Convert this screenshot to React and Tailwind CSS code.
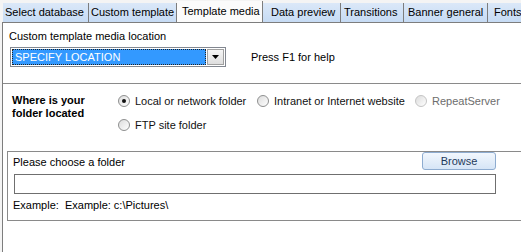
import React from 'react';

const tabs = [
  { label: 'Select database', w: 'w-[86px]', pl: 'pl-[2px]' },
  { label: 'Custom template', w: 'w-[88px]', pl: 'pl-[2px]' },
  { label: 'Template media', w: 'w-[86px]', pl: 'pl-[5px]', active: true },
  { label: 'Data preview', w: 'w-[78px]', pl: 'pl-[8px]' },
  { label: 'Transitions', w: 'w-[63px]', pl: 'pl-[3px]' },
  { label: 'Banner general', w: 'w-[84px]', pl: 'pl-[4px]' },
  { label: 'Fonts', w: 'w-[60px]', pl: 'pl-[6px]' },
];

const Radio = ({ checked, disabled, label, width }) => (
  <div className={`flex items-center h-[16px] ${width}`}>
    <span
      className={`relative w-[12px] h-[12px] rounded-full border flex items-center justify-center bg-gradient-to-br from-[#dcdcdc] to-[#ffffff] ${
        disabled ? 'border-[#c4c4c4]' : 'border-[#8e8f8f]'
      }`}
    >
      {checked && <span className="w-[4px] h-[4px] rounded-full bg-[#111]" />}
    </span>
    <span className={`ml-[5px] whitespace-nowrap ${disabled ? 'text-[#6d6d6d]' : 'text-[#111]'}`}>{label}</span>
  </div>
);

const App = () => {
  return (
    <div className="w-[521px] h-[252px] overflow-hidden bg-[#f4f4f4] font-['Liberation_Sans',Arial,sans-serif] text-[11px] leading-[13px] text-black">
      {/* onglets */}
      <div className="flex items-end h-[22px] pl-[3px] whitespace-nowrap">
        {tabs.map((t) => (
          <div
            key={t.label}
            className={`shrink-0 flex items-center border-r border-[#7d7d7d] ${t.w} ${t.pl} ${
              t.active
                ? 'h-[21px] bg-[#fbfbfb]'
                : 'h-[19px] bg-gradient-to-b from-[#dbe8f8] to-[#c6dbf4]'
            }`}
          >
            {t.label}
          </div>
        ))}
      </div>

      <div className="ml-[2px] h-[230px] bg-white border-l border-t border-[#7d7d7d] flex flex-col">
        {/* emplacement */}
        <div className="h-[61px] border-b border-[#8a8a8a] pl-[6px] pt-[7px]">
          <div>Custom template media location</div>
          <div className="flex items-center mt-[4px] ml-[1px]">
            <div className="w-[216px] h-[20px] border border-[#828790] bg-white flex p-[1px]">
              <div className="flex-1 bg-[#3399ff] border border-dotted border-[#222] text-white flex items-center pl-[2px] text-[11px]">
                SPECIFY LOCATION
              </div>
              <div className="w-[17px] ml-[1px] border border-[#a0a0a0] bg-gradient-to-b from-[#f6f6f6] to-[#dedede] flex items-center justify-center">
                <svg width="7" height="4" viewBox="0 0 7 4">
                  <path d="M0 0h7L3.5 4z" fill="#000" />
                </svg>
              </div>
            </div>
            <div className="ml-[25px]">Press F1 for help</div>
          </div>
        </div>

        {/* dossier */}
        <div className="flex pt-[9px] pl-[9px]">
          <div className="w-[106px] pt-[1px] font-bold leading-[13px]">
            Where is your
            <br />
            folder located
          </div>
          <div className="flex flex-col gap-[8px]">
            <div className="flex">
              <Radio checked label="Local or network folder" width="w-[139px]" />
              <Radio label="Intranet or Internet website" width="w-[158px]" />
              <Radio disabled label="RepeatServer" width="w-[100px]" />
            </div>
            <Radio label="FTP site folder" width="w-[139px]" />
          </div>
        </div>

        <div className="ml-[4px] mt-[18px] w-[600px] border-l border-t border-b border-[#8a8a8a] pl-[5px] pb-[8px]">
          <div className="w-[483px]">
            <div className="flex justify-between items-start h-[22px]">
              <div className="mt-[4px]">Please choose a folder</div>
              <button className="w-[74px] h-[18px] rounded-[3px] border border-[#8eacd0] bg-gradient-to-b from-[#f2f7fd] to-[#d6e5f6] text-[#1e395b] text-[11px] leading-[16px]">
                Browse
              </button>
            </div>
            <div className="ml-[1px] h-[20px] border border-[#6f6f6f] bg-white" />
            <div className="mt-[5px]">Example:&nbsp; Example: c:\Pictures\</div>
          </div>
        </div>
      </div>
    </div>
  );
};

export default App;
